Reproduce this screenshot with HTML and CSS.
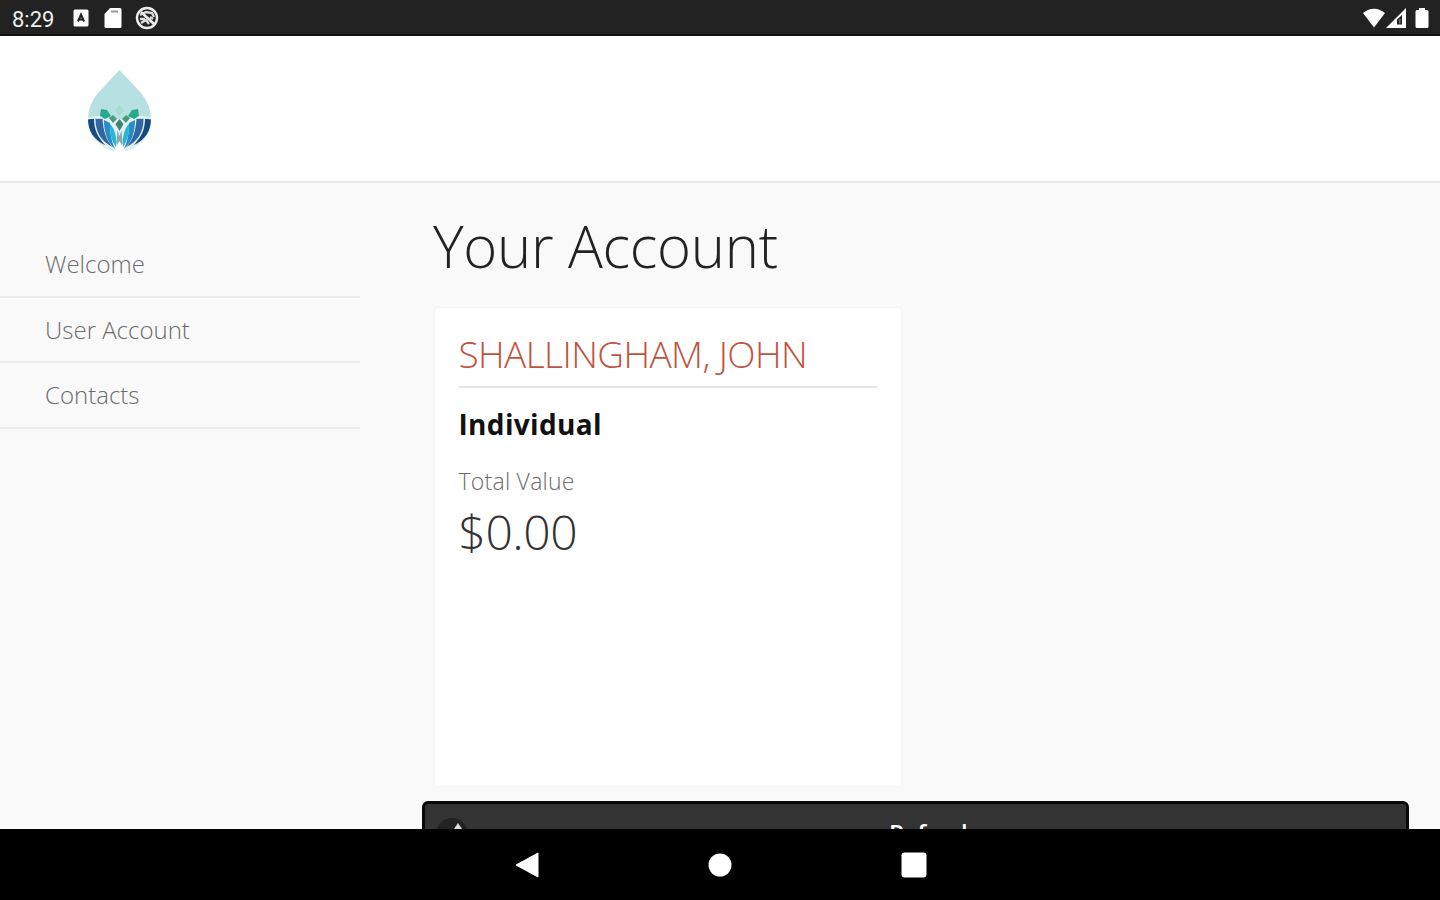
FILE: index.html
```html
<!DOCTYPE html>
<html lang="en">
<head>
  <meta charset="UTF-8">
  <title>Your Account</title>
  <link rel="stylesheet" href="styles.css">
</head>
<body>
  <div class="status-bar">
    <span class="time">8:29</span>
    <svg class="icon-keyboard" width="16" height="18" viewBox="0 0 16 18">
      <rect x="0.5" y="0.5" width="15" height="17" rx="1.5" fill="#fff"/>
      <path d="M5 12.500 8 5.500 11 12.500M6.500 10.500h3" fill="none" stroke="#222" stroke-width="2"/>
    </svg>
    <svg class="icon-card" width="18" height="20" viewBox="0 0 18 20">
      <path d="M6 0h10q1.500 0 1.500 1.500v17q0 1.500-1.500 1.500H2q-1.500 0-1.500-1.500V6z" fill="#fff"/>
      <path d="M7 3.500h7" stroke="#999" stroke-width="2"/>
    </svg>
    <svg class="icon-debug" width="24" height="24" viewBox="0 0 24 24">
      <circle cx="12" cy="12" r="10" fill="none" stroke="#eee" stroke-width="2.400"/>
      <path d="M5 9l6-3 6 1 2 4M5 13l5 0M6 17l5-3 3 4M15 11l3 2" fill="none" stroke="#ddd" stroke-width="2.300"/>
      <path d="M6 6l13 12" stroke="#eee" stroke-width="2.600"/>
    </svg>
    <div class="status-right">
      <svg width="24" height="20" viewBox="0 0 24 20">
        <path d="M1 5Q12-3.500 23 5L12 19.500z" fill="#fff"/>
      </svg>
      <svg width="20" height="20" viewBox="0 0 20 20">
        <path d="M0 20 20 0V20z" fill="#fff"/>
        <path d="M11 16.500v-5L16 7v9.500z" fill="#222"/>
        <path d="M13 15.500v-4l1.500-1v5z" fill="#777"/>
      </svg>
      <svg class="icon-battery" width="14" height="20" viewBox="0 0 14 20">
        <path d="M4 0h6v2h2q1.500 0 1.500 1.500v15q0 1.500-1.500 1.500H2q-1.500 0-1.500-1.500v-15Q.5 2 2 2h2z" fill="#fff"/>
      </svg>
    </div>
  </div>

  <header class="header">
    <svg class="logo" width="64" height="84" viewBox="0 0 64 84">
      <path d="M31.500 0L10 23Q0 35 0 49H63Q63 35 53 23z" fill="#b7e0e2"/>
      <path d="M0 49h63c0 16-10 28-24 32H24C10 77 0 65 0 49z" fill="#e2f0f4"/>
      <!-- outer petals -->
      <path d="M0 49h6c0 11 4 18 11 26C6 70 0 61 0 49z" fill="#174a80"/>
      <path d="M63 49h-6c0 11-4 18-11 26 11-5 17-14 17-26z" fill="#174a80"/>
      <path d="M7.500 49h7c1 12 3 20 10 28C13 71 7.500 62 7.500 49z" fill="#3166a3"/>
      <path d="M55.500 49h-7c-1 12-3 20-10 28 11.500-6 17-15 17-28z" fill="#3166a3"/>
      <path d="M16 50l6 3c0 9 1 17 5 26-8-7-11-17-11-29z" fill="#2a8cc4"/>
      <path d="M47 50l-6 3c0 9-1 17-5 26 8-7 11-17 11-29z" fill="#2a8cc4"/>
      <path d="M22 54c5 5 7 14 6 23-5-7-6-14-6-23zM41 54c-5 5-7 14-6 23 5-7 6-14 6-23z" fill="#27b4d6"/>
      <path d="M29.500 60h4l1 13-3 4-3-4z" fill="#8aa9ad"/>
      <path d="M31.500 71l6 12H25.500z" fill="#fff"/>
      <path d="M0 48.500Q16 44 24 52q5 4 7.500 11Q34 56 39 52q8-8 24-3.500" fill="none" stroke="#e3f3f3" stroke-width="2"/>
      <!-- leaf tips -->
      <path d="M13 39l6 1 4 6-6 3-5-3zM50 39l-6 1-4 6 6 3 5-3z" fill="#2aa88a"/>
      <path d="M31.500 35l4.500 5-4.500 6-4.500-6z" fill="#a5ddcd"/>
      <path d="M21 48l4-3 4 4-4 4zM42 48l-4-3-4 4 4 4z" fill="#4c9a79"/>
      <path d="M31.500 49l4 5-4 7-4-7z" fill="#3f8073"/>
    </svg>
  </header>

  <div class="content">
    <nav class="sidebar">
      <a class="menu-item">Welcome</a>
      <a class="menu-item">User Account</a>
      <a class="menu-item">Contacts</a>
    </nav>
    <main class="main">
      <h1>Your Account</h1>
      <div class="card">
        <h2>SHALLINGHAM, JOHN</h2>
        <div class="type">Individual</div>
        <div class="label">Total Value</div>
        <div class="value">$0.00</div>
      </div>
      <div class="refresh">
        <svg class="refresh-icon" width="34" height="34" viewBox="0 0 34 34">
          <circle cx="15" cy="17" r="16" fill="#222"/>
          <path d="M21 6l4 6h-8z" fill="#ddd"/>
        </svg>
        <span class="refresh-text">Refresh</span>
      </div>
    </main>
  </div>

  <div class="nav-bar">
    <svg width="24" height="26" viewBox="0 0 24 26"><path d="M23 1v24L1 13z" fill="#fff" stroke="#fff"/></svg>
    <svg width="24" height="24" viewBox="0 0 24 24"><circle cx="12" cy="12" r="11.500" fill="#fff"/></svg>
    <svg width="26" height="26" viewBox="0 0 26 26"><rect x="0.500" y="0.500" width="25" height="25" rx="3" fill="#fff"/></svg>
  </div>
</body>
</html>
```

FILE: styles.css
```css
* {
  box-sizing: border-box;
}

body {
  margin: 0;
  width: 1440px;
  height: 900px;
  overflow: hidden;
  display: flex;
  flex-direction: column;
  font-family: "Open Sans", sans-serif;
  font-weight: 300;
  background-color: #f9f9f9;
}

.status-bar {
  height: 36px;
  flex: none;
  display: flex;
  align-items: center;
  padding: 2px 11px 0 12px;
  background-color: #222;
  border-bottom: 2px solid #111;
}

.time {
  width: 61px;
  padding-top: 2px;
  font-family: Roboto, sans-serif;
  font-size: 22px;
  font-weight: 400;
  color: #eee;
}

.icon-card {
  margin-left: 15px;
}

.icon-debug {
  margin-left: 13px;
}

.status-right {
  display: flex;
  align-items: center;
  margin-left: auto;
}

.status-right .icon-battery {
  margin-left: 9px;
}

.header {
  height: 147px;
  flex: none;
  padding: 34px 88px;
  background-color: #fff;
  border-bottom: 2px solid #e9e9e9;
}

.logo {
  display: block;
}

.content {
  flex: 1;
  min-height: 0;
  display: flex;
  overflow: hidden;
}

.sidebar {
  width: 360px;
  padding-top: 49px;
  margin-right: 62px;
}

.menu-item {
  display: block;
  height: 65.7px;
  padding-left: 45px;
  line-height: 63px;
  font-size: 24px;
  color: #6c6c6c;
  border-bottom: 2px solid #ebebeb;
}

.main {
  width: 987px;
}

h1 {
  margin: 0 0 0 11px;
  padding-top: 21px;
  height: 124px;
  font-size: 58px;
  font-weight: 300;
  letter-spacing: -0.3px;
  line-height: 84px;
  color: #222;
}

.card {
  width: 468px;
  height: 480px;
  margin-left: 11.5px;
  padding: 20px 24px;
  background-color: #fff;
  border: 1px solid #f5f5f5;
  border-radius: 4px;
}

h2 {
  margin: 0;
  height: 60px;
  font-size: 37px;
  font-weight: 300;
  letter-spacing: -0.6px;
  line-height: 51px;
  color: #c0533f;
  border-bottom: 2px solid #e5e5e5;
}

.type {
  margin-top: 16px;
  font-size: 28px;
  font-weight: 700;
  letter-spacing: 0.35px;
  line-height: 40px;
  color: #111;
}

.label {
  margin-top: 20px;
  font-size: 23px;
  letter-spacing: 0.25px;
  line-height: 34px;
  color: #6c6c6c;
}

.value {
  font-size: 48px;
  letter-spacing: -0.5px;
  line-height: 68px;
  color: #333;
}

.refresh {
  height: 70px;
  margin-top: 14px;
  display: flex;
  padding: 13px 12px;
  background-color: #333;
  border: 3px solid #080808;
  border-radius: 6px;
}

.refresh-text {
  margin-left: 418px;
  font-size: 24px;
  font-weight: 600;
  letter-spacing: -0.3px;
  line-height: 32px;
  color: #fff;
}

.nav-bar {
  height: 71px;
  flex: none;
  display: flex;
  align-items: center;
  justify-content: center;
  gap: 169px;
  padding-left: 1px;
  background-color: #000;
}
```
